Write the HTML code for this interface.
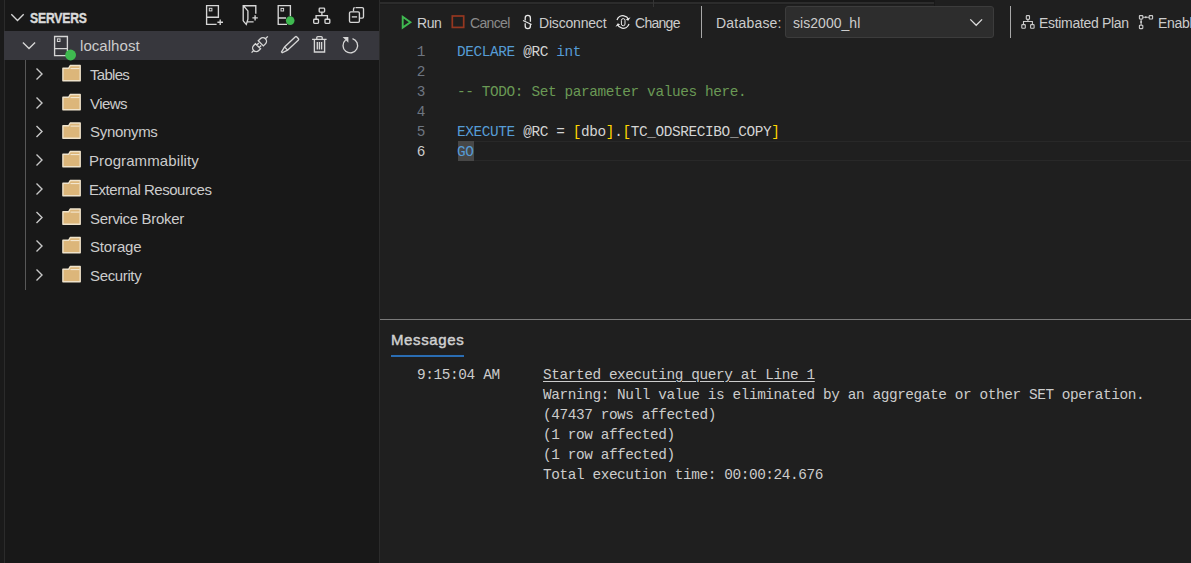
<!DOCTYPE html>
<html><head><meta charset="utf-8">
<style>
*{margin:0;padding:0;box-sizing:border-box}
html,body{width:1191px;height:563px;overflow:hidden;background:#1f1f1f;font-family:"Liberation Sans",sans-serif;color:#cccccc}
.a{position:absolute}
.t{position:absolute;white-space:pre;line-height:1}
svg{position:absolute;overflow:visible}
#strip{left:0;top:0;width:4px;height:563px;background:#1a1a1a}
#stripb{left:4px;top:0;width:1px;height:563px;background:#2b2b2b}
#side{left:5px;top:0;width:374px;height:563px;background:#181818}
#sideb{left:379px;top:0;width:1px;height:563px;background:#2b2b2b}
#sel{left:4px;top:31px;width:375px;height:29px;background:#37373d}
.lbl{font-size:15px;color:#cccccc}
.mono{font-family:"Liberation Mono",monospace;font-size:14.4px;letter-spacing:-0.37px}
.kw{color:#569cd6}.cm{color:#6a9955}.br{color:#ffd700}
.tb{font-size:14px;color:#cccccc}
</style></head><body>
<div id="strip" class="a"></div>
<div id="stripb" class="a"></div>
<div id="side" class="a"></div>
<div id="sideb" class="a"></div>
<div id="sel" class="a"></div>

<!-- SERVERS header -->

<div class="t" style="left:30px;top:11px;font-size:14px;font-weight:bold;color:#dadada;letter-spacing:-0.2px;transform:scaleX(0.87);transform-origin:0 0;-webkit-text-stroke:0.4px #dadada">SERVERS</div>


<svg class="a" style="left:0;top:0;z-index:2" width="1191" height="563">
<g fill="none" stroke="#d6d6d6" stroke-width="1.35">
<!-- header chevron -->
<path d="M11.3 14.3 L17.5 20.5 L23.7 14.3"/>
<!-- new connection -->
<path d="M216.6 24.4 H206.6 V5.6 H218.4 V17.2 H206.6"/>
<rect x="209.3" y="8.3" width="2.6" height="2.6" stroke-width="1"/>
<path d="M217.4 22.2 H223 M220.2 19.4 V25"/>
<!-- new server group -->
<path d="M253.6 21.8 H247.6 M243.2 20.9 V5.7 H255.8 V13.8 M243.6 6 L247.9 10.9 V19.1 L246.3 24.4 L243.2 20.9"/>
<path d="M252.4 17.8 H257.8 M255.1 15.2 V20.5"/>
<!-- active connections -->
<path d="M287 24.4 H278.2 V5.6 H290.4 V16 M278.2 18 H286"/>
<rect x="281" y="8.4" width="2.6" height="2.6" stroke-width="1"/>
<!-- hierarchy -->
<rect x="319.2" y="8.1" width="5.4" height="4.0" rx="0.8"/>
<rect x="313.7" y="19.2" width="4.8" height="4.2" rx="0.8"/>
<rect x="325" y="19.2" width="4.8" height="4.2" rx="0.8"/>
<path d="M321.9 12.1 V15.6 M316.1 19.2 V15.6 H327.4 V19.2"/>
<!-- collapse all -->
<path d="M355.5 7.6 H362.2 A1.3 1.3 0 0 1 363.5 8.9 V16.8 A1.3 1.3 0 0 1 362.2 18.1 H359.6 M353.5 11.3 V8.9 A1.3 1.3 0 0 1 354.8 7.6"/>
<rect x="349.5" y="11.8" width="9.9" height="10.5" rx="1.3"/>
<path d="M351.8 16.9 H357.1"/>
<!-- localhost chevron -->
<path d="M22.9 42.4 L29 48.5 L35.1 42.4"/>
<!-- server icon -->
<path d="M66 55.6 H54.6 V36.5 H67.4 V51 M54.6 48.6 H67.4"/>
<rect x="57.4" y="38.9" width="2.6" height="2.6" stroke-width="1"/>
<!-- plug -->
<g transform="translate(259.7 44.5) rotate(45)">
  <path d="M-3.6 -1.6 H3.6 V-4.5 A3.6 3.6 0 0 0 -3.6 -4.5 Z M0 -8.1 V-11.5"/>
  <path d="M-3.6 2.4 H3.6 V4.9 A3.6 3.6 0 0 1 -3.6 4.9 Z M0 8.5 V11.5 M-1.7 2.4 V-0.4 M1.7 2.4 V-0.4"/>
</g>
<!-- pencil -->
<g transform="translate(289.7 45.1) rotate(47)">
  <path d="M-2.2 -9.9 A0.8 0.8 0 0 1 -1.4 -10.7 H1.4 A0.8 0.8 0 0 1 2.2 -9.9 V5 L0.5 10.7 H-0.5 L-2.2 5 Z M-2.2 5 H2.2"/>
</g>
<!-- trash -->
<path d="M312.1 39.4 H326.6 M316.8 39.4 V37.6 A1 1 0 0 1 317.8 36.6 H321.2 A1 1 0 0 1 322.2 37.6 V39.4 M314.4 39.4 V52 H324.6 V39.4 M317.3 42 V49.6 M319.4 42 V49.6 M321.6 42 V49.6"/>
<!-- refresh -->
<path d="M352.5 38.6 A7.3 7.3 0 1 1 345.6 40"/>
<path d="M342.6 37 H348.4 V42.8 Z" fill="#d6d6d6" stroke="none"/>
</g>
<circle cx="290.2" cy="20.6" r="4.3" fill="#3fb950"/>
<circle cx="70.6" cy="55" r="5.4" fill="#3fb950"/>
<path d="M36.5 68.5 L42 74 L36.5 79.5" fill="none" stroke="#c8c8c8" stroke-width="1.4"/>
<g transform="translate(0,0)"><path d="M62.9 68.3 H68.6 L70.2 65.5 H80.2 V80.8 H62.9 Z" fill="#dcb67a" stroke="#efe3cb" stroke-width="1.4" stroke-linejoin="round"/><path d="M70.5 68.6 H79.6" stroke="#f6ecd8" stroke-width="1"/></g>
<path d="M36.5 97.5 L42 103 L36.5 108.5" fill="none" stroke="#c8c8c8" stroke-width="1.4"/>
<g transform="translate(0,29)"><path d="M62.9 68.3 H68.6 L70.2 65.5 H80.2 V80.8 H62.9 Z" fill="#dcb67a" stroke="#efe3cb" stroke-width="1.4" stroke-linejoin="round"/><path d="M70.5 68.6 H79.6" stroke="#f6ecd8" stroke-width="1"/></g>
<path d="M36.5 126.0 L42 131.5 L36.5 137.0" fill="none" stroke="#c8c8c8" stroke-width="1.4"/>
<g transform="translate(0,57.5)"><path d="M62.9 68.3 H68.6 L70.2 65.5 H80.2 V80.8 H62.9 Z" fill="#dcb67a" stroke="#efe3cb" stroke-width="1.4" stroke-linejoin="round"/><path d="M70.5 68.6 H79.6" stroke="#f6ecd8" stroke-width="1"/></g>
<path d="M36.5 154.5 L42 160 L36.5 165.5" fill="none" stroke="#c8c8c8" stroke-width="1.4"/>
<g transform="translate(0,86)"><path d="M62.9 68.3 H68.6 L70.2 65.5 H80.2 V80.8 H62.9 Z" fill="#dcb67a" stroke="#efe3cb" stroke-width="1.4" stroke-linejoin="round"/><path d="M70.5 68.6 H79.6" stroke="#f6ecd8" stroke-width="1"/></g>
<path d="M36.5 183.5 L42 189 L36.5 194.5" fill="none" stroke="#c8c8c8" stroke-width="1.4"/>
<g transform="translate(0,115)"><path d="M62.9 68.3 H68.6 L70.2 65.5 H80.2 V80.8 H62.9 Z" fill="#dcb67a" stroke="#efe3cb" stroke-width="1.4" stroke-linejoin="round"/><path d="M70.5 68.6 H79.6" stroke="#f6ecd8" stroke-width="1"/></g>
<path d="M36.5 212.0 L42 217.5 L36.5 223.0" fill="none" stroke="#c8c8c8" stroke-width="1.4"/>
<g transform="translate(0,143.5)"><path d="M62.9 68.3 H68.6 L70.2 65.5 H80.2 V80.8 H62.9 Z" fill="#dcb67a" stroke="#efe3cb" stroke-width="1.4" stroke-linejoin="round"/><path d="M70.5 68.6 H79.6" stroke="#f6ecd8" stroke-width="1"/></g>
<path d="M36.5 240.5 L42 246 L36.5 251.5" fill="none" stroke="#c8c8c8" stroke-width="1.4"/>
<g transform="translate(0,172)"><path d="M62.9 68.3 H68.6 L70.2 65.5 H80.2 V80.8 H62.9 Z" fill="#dcb67a" stroke="#efe3cb" stroke-width="1.4" stroke-linejoin="round"/><path d="M70.5 68.6 H79.6" stroke="#f6ecd8" stroke-width="1"/></g>
<path d="M36.5 269.5 L42 275 L36.5 280.5" fill="none" stroke="#c8c8c8" stroke-width="1.4"/>
<g transform="translate(0,201)"><path d="M62.9 68.3 H68.6 L70.2 65.5 H80.2 V80.8 H62.9 Z" fill="#dcb67a" stroke="#efe3cb" stroke-width="1.4" stroke-linejoin="round"/><path d="M70.5 68.6 H79.6" stroke="#f6ecd8" stroke-width="1"/></g>

<g fill="none" stroke="#c5c5c5" stroke-width="1.2">
<path d="M384 0"/>
</g>
<!-- toolbar -->
<path d="M402.7 16.8 L410.4 22.2 L402.7 27.6 Z" fill="none" stroke="#3fb950" stroke-width="1.9" stroke-linejoin="miter"/>
<rect x="452.3" y="16" width="11.4" height="11.4" fill="none" stroke="#953720" stroke-width="1.7"/>
<g fill="none" stroke="#e8e8e8" stroke-width="1.3">
<path d="M525.2 20.5 V18 A2.6 2.6 0 0 1 530.4 18 V21.8"/>
<path d="M525.2 23.2 V26 A2.6 2.6 0 0 0 530.4 26 V24"/>
<path d="M523 20.6 L531.6 24.4" stroke-width="1.1"/>
<path d="M624 15.8 A6.3 6.3 0 0 0 617 20"/>
<path d="M622 28.2 A6.3 6.3 0 0 0 629 24"/>
<path d="M629 24 A6.3 6.3 0 0 0 629.2 20.4" stroke-width="0"/>
<path d="M624 15.8 A6.3 6.3 0 0 1 628.6 19.4"/>
<path d="M622 28.2 A6.3 6.3 0 0 1 617.4 24.6"/>
<rect x="621.4" y="18.6" width="3.6" height="7.2" rx="1.8" stroke-width="1"/>
</g>
<path d="M630.5 17.3 L628.2 20.8 L625.8 19.6 Z M615.5 26.7 L617.8 23.2 L620.2 24.4 Z" fill="#e8e8e8"/>
<g fill="none" stroke="#cccccc" stroke-width="1.1">
<path d="M970.3 19.4 L976.2 25.3 L982.1 19.4" stroke="#dcdcdc" stroke-width="1.3"/>
<rect x="1026.3" y="15.6" width="3.2" height="3.8" rx="0.6"/>
<rect x="1021.8" y="24.6" width="3.5" height="3.7" rx="0.6"/>
<rect x="1030.6" y="24.6" width="3.5" height="3.7" rx="0.6"/>
<path d="M1027.9 19.4 V21.5 M1023.5 24.6 V21.5 H1032.4 V24.6"/>
<rect x="1139.4" y="15.6" width="3.4" height="3.4" rx="0.5"/>
<rect x="1149.2" y="15.6" width="3.4" height="3.4" rx="0.5"/>
<rect x="1139.4" y="25.2" width="3.4" height="3.4" rx="0.5"/>
<path d="M1142.8 17.3 H1149.2 M1141.1 19 V25.2"/>
</g>
<circle cx="1145.8" cy="17.3" r="1" fill="#cccccc"/>
<circle cx="1141.1" cy="21.9" r="1" fill="#cccccc"/>
<!-- separators & top strip -->
<rect x="380" y="0" width="554" height="2" fill="#181818"/>
<rect x="380" y="2" width="554" height="2" fill="#2c2c2c"/><rect x="380" y="4" width="554" height="1" fill="#1c1c1c"/>
<rect x="653" y="0" width="1" height="7" fill="#353535"/><rect x="934" y="0" width="1" height="6" fill="#191919"/>
<rect x="701" y="6" width="1" height="32" fill="#a8a8a8"/>
<rect x="1010" y="6" width="1" height="32" fill="#a8a8a8"/>
<!-- indent guide -->
<rect x="25" y="60" width="1" height="230" fill="#585858"/>
</svg>

<!-- tree -->
<div class="t lbl" style="left:80px;top:38px;letter-spacing:0.05px">localhost</div>
<div class="t lbl" style="left:90px;top:67px;letter-spacing:-0.7px">Tables</div>
<div class="t lbl" style="left:90px;top:96px;letter-spacing:-0.57px">Views</div>
<div class="t lbl" style="left:90px;top:124px;letter-spacing:-0.31px">Synonyms</div>
<div class="t lbl" style="left:89px;top:153px;letter-spacing:0.1px">Programmability</div>
<div class="t lbl" style="left:89px;top:182px;letter-spacing:-0.47px">External Resources</div>
<div class="t lbl" style="left:90px;top:211px;letter-spacing:-0.32px">Service Broker</div>
<div class="t lbl" style="left:90px;top:239px;letter-spacing:-0.15px">Storage</div>
<div class="t lbl" style="left:90px;top:268px;letter-spacing:-0.36px">Security</div>

<!-- editor toolbar -->
<div class="t tb" style="left:417px;top:16px;letter-spacing:-0.4px">Run</div>
<div class="t tb" style="left:470px;top:16px;color:#8b8b8b;letter-spacing:-0.66px">Cancel</div>
<div class="t tb" style="left:539px;top:16px;letter-spacing:-0.19px">Disconnect</div>
<div class="t tb" style="left:635px;top:16px;letter-spacing:-0.72px">Change</div>
<div class="t tb" style="left:716px;top:16px;letter-spacing:0.21px">Database:</div>
<div class="a" style="left:785px;top:6px;width:209px;height:32px;background:#2d2d2d;border:1px solid #3c3c3c;border-radius:3px"></div>
<div class="t tb" style="left:793px;top:16px;letter-spacing:0.04px">sis2000_hl</div>
<div class="t tb" style="left:1039px;top:16px;letter-spacing:-0.31px">Estimated Plan</div>
<div class="t tb" style="left:1158px;top:16px;letter-spacing:-0.3px">Enable Actual Plan</div>


<!-- code -->
<div class="a mono" style="left:380px;top:42px;width:45px;line-height:20px;text-align:right;color:#6e7681;white-space:pre">1
2
3
4
5
<span style="color:#cccccc">6</span></div>
<div class="a" style="left:458px;top:141px;width:733px;height:20px;border-top:1px solid #282828;border-bottom:1px solid #282828"></div>
<div class="a" style="left:458px;top:141px;width:16px;height:20px;background:#474747"></div>
<div class="a mono" style="left:457px;top:42px;line-height:20px;color:#d4d4d4;white-space:pre"><span class="kw">DECLARE</span> @RC <span class="kw">int</span>

<span class="cm">-- TODO: Set parameter values here.</span>

<span class="kw">EXECUTE</span> @RC = <span class="br">[</span>dbo<span class="br">]</span>.<span class="br">[</span>TC_ODSRECIBO_COPY<span class="br">]</span>
<span class="kw">GO</span></div>


<!-- panel -->
<div class="a" style="left:380px;top:319px;width:811px;height:1px;background:#7a7a7a"></div>
<div class="t" style="left:391px;top:332px;font-size:15px;font-weight:normal;-webkit-text-stroke:0.45px #d0d0d0;color:#d0d0d0;letter-spacing:0.62px">Messages</div>
<div class="a" style="left:391px;top:355px;width:73px;height:2px;background:#2a6db3"></div>
<div class="a mono" style="left:417px;top:365px;line-height:20px;color:#cccccc;white-space:pre">9:15:04 AM</div>
<div class="a mono" style="left:543px;top:365px;line-height:20px;color:#cccccc;white-space:pre;letter-spacing:-0.4px"><span style="text-decoration:underline;text-underline-offset:2px">Started executing query at Line 1</span>
Warning: Null value is eliminated by an aggregate or other SET operation.
(47437 rows affected)
(1 row affected)
(1 row affected)
Total execution time: 00:00:24.676</div>
</body></html>
